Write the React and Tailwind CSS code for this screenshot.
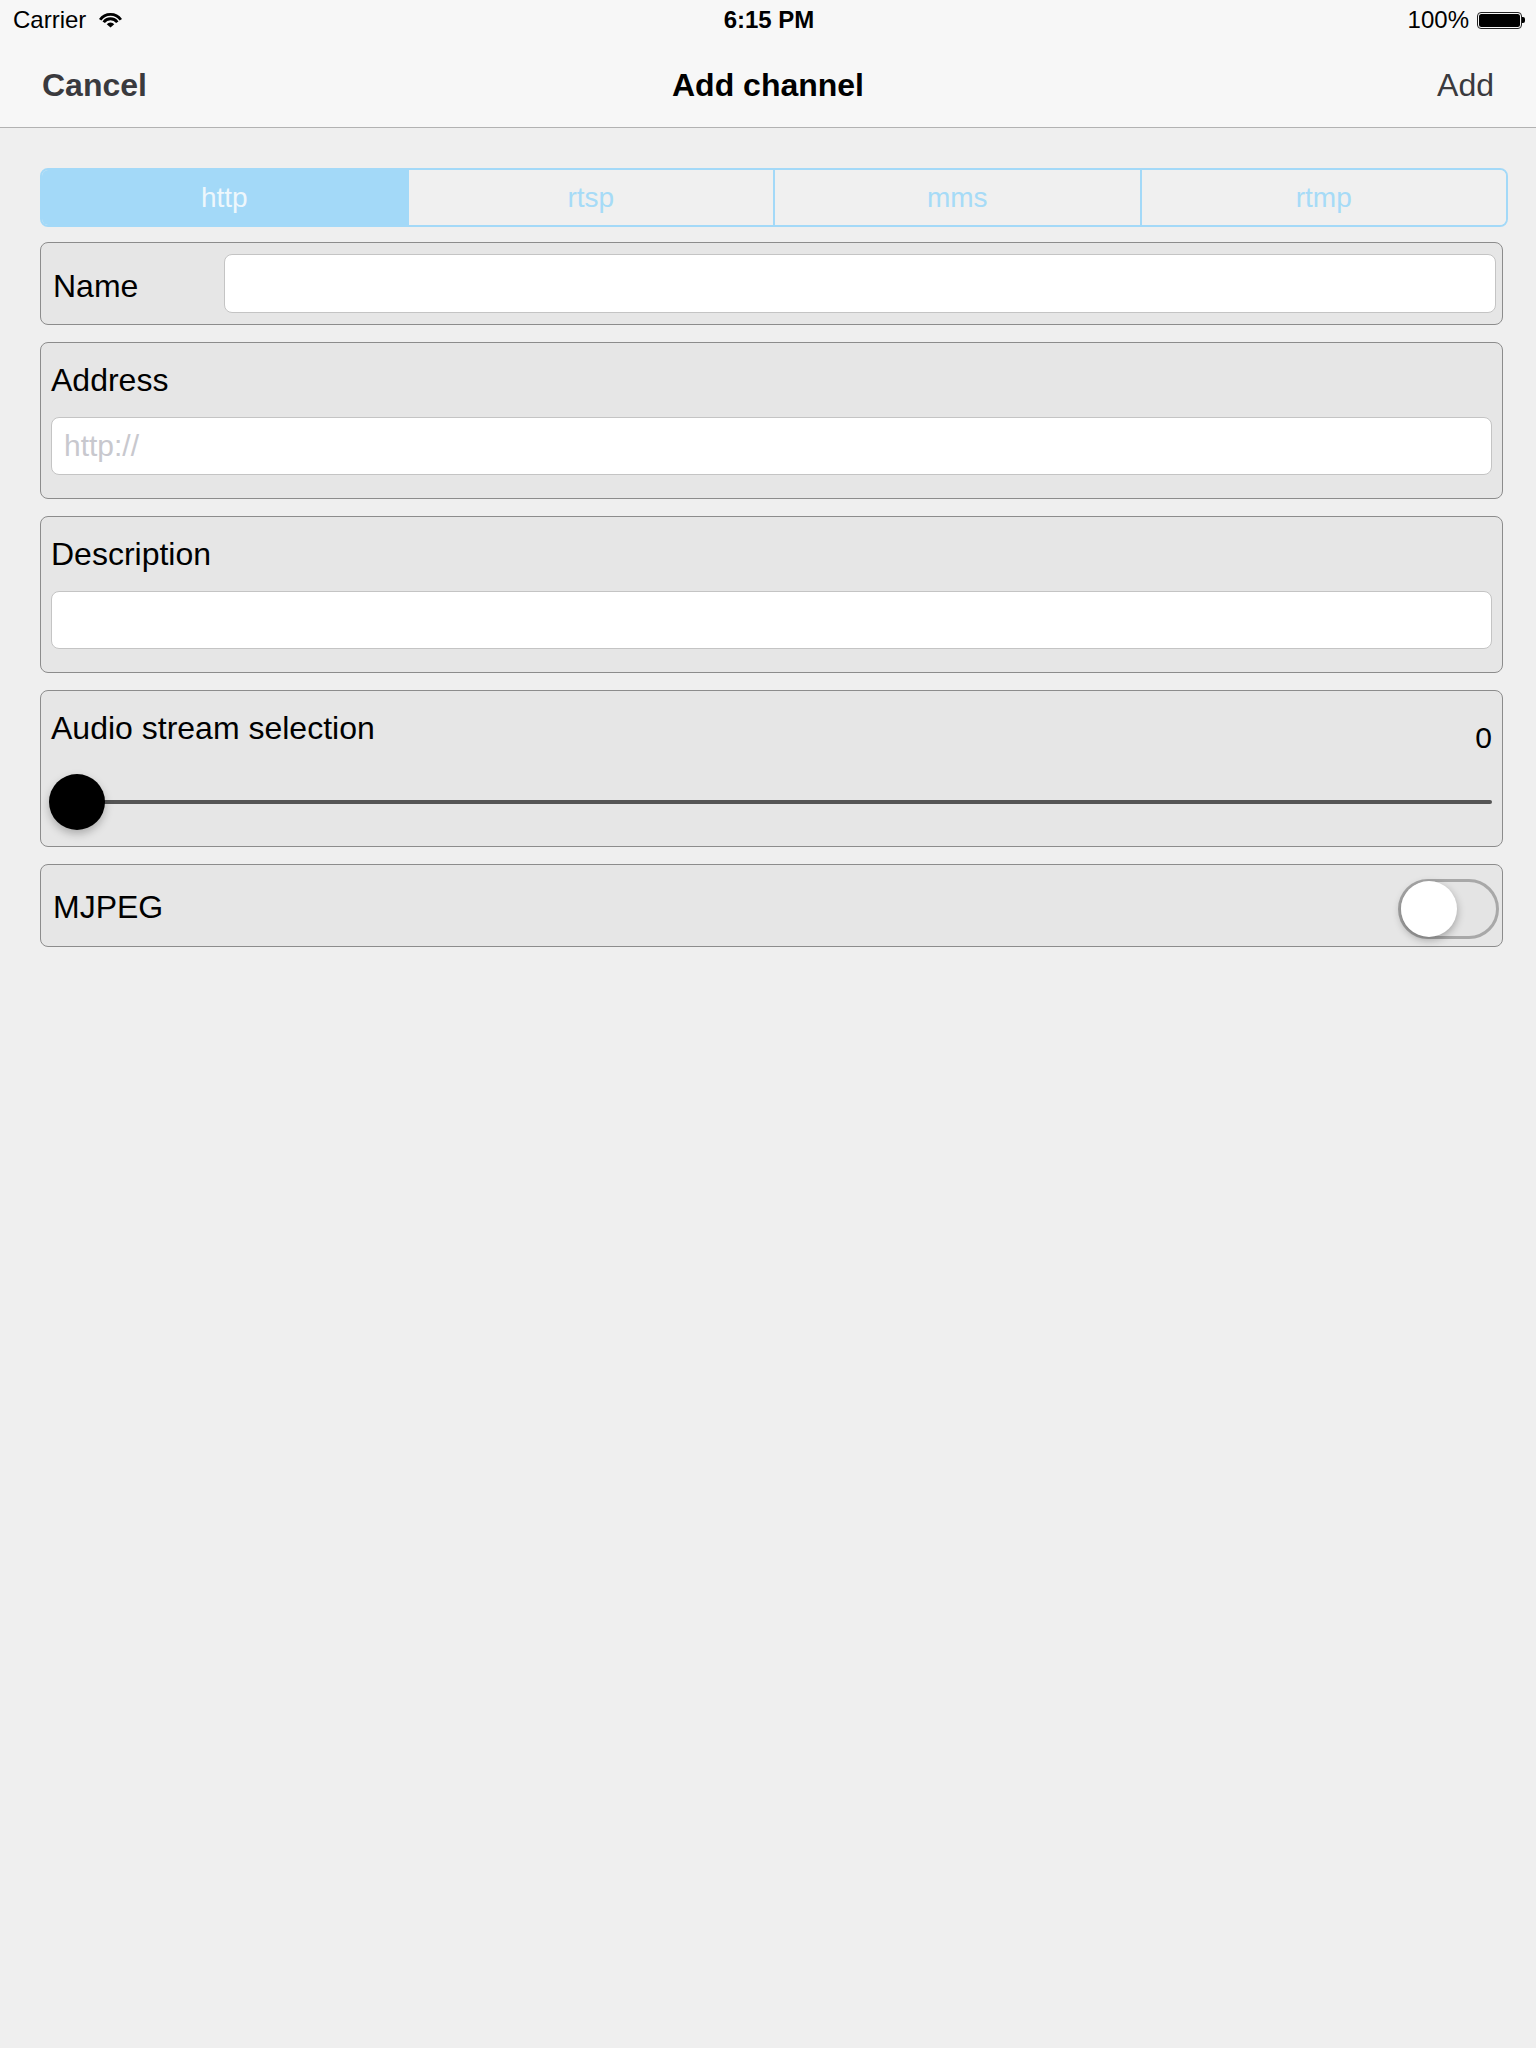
import React from "react";

// Fan-shaped wifi glyph for the status bar
function WifiIcon() {
  const cx = 12.5;
  const cy = 15;
  const a = (55 * Math.PI) / 180;
  const pt = (r) => [r * Math.sin(a), r * Math.cos(a)];
  const arc = (r) => {
    const [dx, dy] = pt(r);
    return `M ${cx - dx} ${cy - dy} A ${r} ${r} 0 0 1 ${cx + dx} ${cy - dy}`;
  };
  const [ix, iy] = pt(4.6);
  return (
    <svg width="25" height="17" viewBox="0 0 25 17" className="mt-[1px]">
      <path
        d={`M ${cx} ${cy + 0.6} L ${cx - ix} ${cy - iy} A 4.6 4.6 0 0 1 ${cx + ix} ${cy - iy} Z`}
        fill="#000"
      />
      <path d={arc(8.3)} stroke="#000" strokeWidth="2.9" fill="none" />
      <path d={arc(12.6)} stroke="#000" strokeWidth="2.9" fill="none" />
    </svg>
  );
}

function Battery() {
  return (
    <div className="flex items-center">
      <div className="flex h-[17px] w-[45px] rounded-[4px] border border-[#222] p-[1px]">
        <div className="h-full w-full rounded-[2.5px] bg-black" />
      </div>
      <div className="h-[6px] w-[3px] rounded-r-[2px] bg-black" />
    </div>
  );
}

const tabs = ["http", "rtsp", "mms", "rtmp"];

export default function App() {
  const selected = 0;
  return (
    <div className="min-h-screen w-full bg-[#efefef] font-['Liberation_Sans',Arial,sans-serif] text-black">
      <header className="bg-[#f7f7f7]">
        <div className="grid h-[40px] grid-cols-[1fr_auto_1fr] items-center pl-[13px] pr-[11px] text-[24px] leading-[24px]">
          <div className="flex items-center gap-[12px]">
            <span>Carrier</span>
            <WifiIcon />
          </div>
          <span className="font-bold">6:15 PM</span>
          <div className="flex items-center justify-end gap-[8px]">
            <span>100%</span>
            <Battery />
          </div>
        </div>
        <div className="grid h-[88px] grid-cols-[1fr_auto_1fr] items-center border-b border-[#b2b2b2] px-[40px] pt-[2px] text-[32px] leading-[32px]">
          <span className="pl-[2px] font-bold text-[#3a3a3e]">Cancel</span>
          <span className="font-bold text-black">Add channel</span>
          <span className="justify-self-end pr-[2px] text-[#3a3a3e]">Add</span>
        </div>
      </header>

      <main className="pl-[40px] pr-[28px] pt-[40px]">
        <div className="flex h-[59px] overflow-hidden rounded-[8px] border-2 border-[#a3d9f8]">
          {tabs.map((t, i) => (
            <div
              key={t}
              className={
                i === selected
                  ? "flex flex-1 items-center justify-center bg-[#a3d9f8] text-[28px] text-[#eef7fc]"
                  : "flex flex-1 items-center justify-center border-l-2 border-[#a3d9f8] bg-[#f0f0f0] text-[28px] text-[#a6dbf7]"
              }
            >
              {t}
            </div>
          ))}
        </div>

        <div className="mr-[5px]">
          <div className="mt-[15px] flex h-[83px] items-center rounded-[8px] border border-[#8c8c8c] bg-[#e6e6e6] pl-[12px] pr-[6px]">
            <span className="mt-[4px] w-[171px] text-[32px] leading-[32px]">Name</span>
            <input className="h-[59px] flex-1 rounded-[8px] border border-[#c4c4c4] bg-white px-[12px] text-[30px] outline-none" />
          </div>

          <div className="mt-[17px] flex h-[157px] flex-col rounded-[8px] border border-[#8c8c8c] bg-[#e6e6e6] px-[10px] pt-[21px]">
            <span className="text-[32px] leading-[32px]">Address</span>
            <input
              placeholder="http://"
              className="mt-[21px] h-[58px] rounded-[8px] border border-[#c4c4c4] bg-white px-[12px] text-[30px] outline-none placeholder:text-[#c8c8ce]"
            />
          </div>

          <div className="mt-[17px] flex h-[157px] flex-col rounded-[8px] border border-[#8c8c8c] bg-[#e6e6e6] px-[10px] pt-[21px]">
            <span className="text-[32px] leading-[32px]">Description</span>
            <input className="mt-[21px] h-[58px] rounded-[8px] border border-[#c4c4c4] bg-white px-[12px] text-[30px] outline-none" />
          </div>

          <div className="mt-[17px] flex h-[157px] flex-col rounded-[8px] border border-[#8c8c8c] bg-[#e6e6e6] px-[10px] pt-[21px]">
            <div className="flex h-[32px] items-start justify-between">
              <span className="text-[32px] leading-[32px]">Audio stream selection</span>
              <span className="mt-[11px] text-[30px] leading-[30px]">0</span>
            </div>
            <div className="relative mt-[30px] flex h-[56px] items-center">
              <div className="h-[4px] w-full rounded-full bg-[#555555]" />
              <div className="absolute left-[-2px] top-0 h-[56px] w-[56px] rounded-full bg-black shadow-[0_4px_8px_rgba(0,0,0,0.25)]" />
            </div>
          </div>

          <div className="mt-[17px] flex h-[83px] items-center justify-between rounded-[8px] border border-[#8c8c8c] bg-[#e6e6e6] pl-[12px] pr-[3px]">
            <span className="mt-[2px] text-[32px] leading-[32px]">MJPEG</span>
            <div className="relative mt-[7px] h-[60px] w-[101px] rounded-full border-[3px] border-[#a8a8a8] bg-[#e4e4e4]">
              <div className="absolute left-0 top-[-1px] h-[56px] w-[56px] rounded-full bg-white shadow-[0_3px_8px_rgba(0,0,0,0.3)]" />
            </div>
          </div>
        </div>
      </main>
    </div>
  );
}
